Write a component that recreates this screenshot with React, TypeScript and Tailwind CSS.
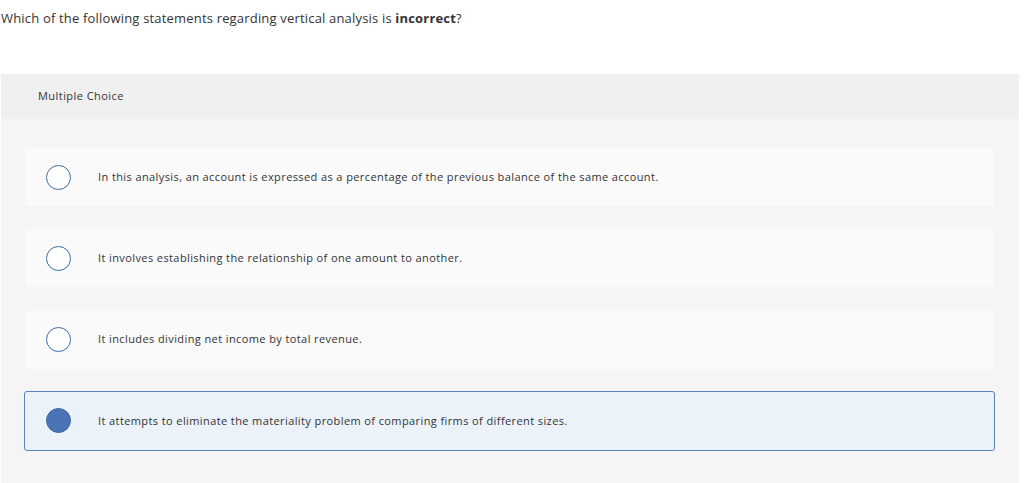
import React from "react";

const options = [
  "In this analysis, an account is expressed as a percentage of the previous balance of the same account.",
  "It involves establishing the relationship of one amount to another.",
  "It includes dividing net income by total revenue.",
  "It attempts to eliminate the materiality problem of comparing firms of different sizes.",
];

export default function App() {
  const selected = 3;
  return (
    <div className="w-[1024px] h-[483px] bg-white overflow-hidden text-[#333]" style={{ fontFamily: "'Open Sans', sans-serif" }}>
      <div className="pl-[1px] pt-[9px] h-[74px] text-[13px] leading-[18px] tracking-[0.18px]">
        Which of the following statements regarding vertical analysis is <b className="font-bold">incorrect</b>?
      </div>
      <div className="ml-[1px] w-[1018px] h-[409px] bg-[#f5f5f5] rounded-tl-[2px] rounded-tr-[2px]">
        <div className="h-[45px] bg-[#f0f0f0] flex items-center pl-[37px] text-[11px] tracking-[0.45px]">Multiple Choice</div>
        <div className="pt-[28px] pl-[23px] w-[994px] flex flex-col gap-[21.33px]">
          {options.map((o, i) => {
            const sel = i === selected;
            return (
              <div
                key={i}
                className={
                  sel
                    ? "h-[60px] rounded-[3px] bg-[#ebf2fa] border border-[#5b81bf] flex items-center"
                    : "h-[60px] rounded-[3px] bg-[#fafafa] border border-[#f5f5f5] flex items-center"
                }
              >
                <div className="w-[73px] flex pl-[21px]">
                  {sel ? (
                    <div className="w-[25px] h-[25px] rounded-full bg-[#4a74b6] border border-[#3e66a6]" />
                  ) : (
                    <div className="w-[25px] h-[25px] rounded-full bg-white border border-[#3e6aa8]" />
                  )}
                </div>
                <div className="text-[11px] text-[#333] tracking-[0.4px]">{o}</div>
              </div>
            );
          })}
        </div>
      </div>
    </div>
  );
}
